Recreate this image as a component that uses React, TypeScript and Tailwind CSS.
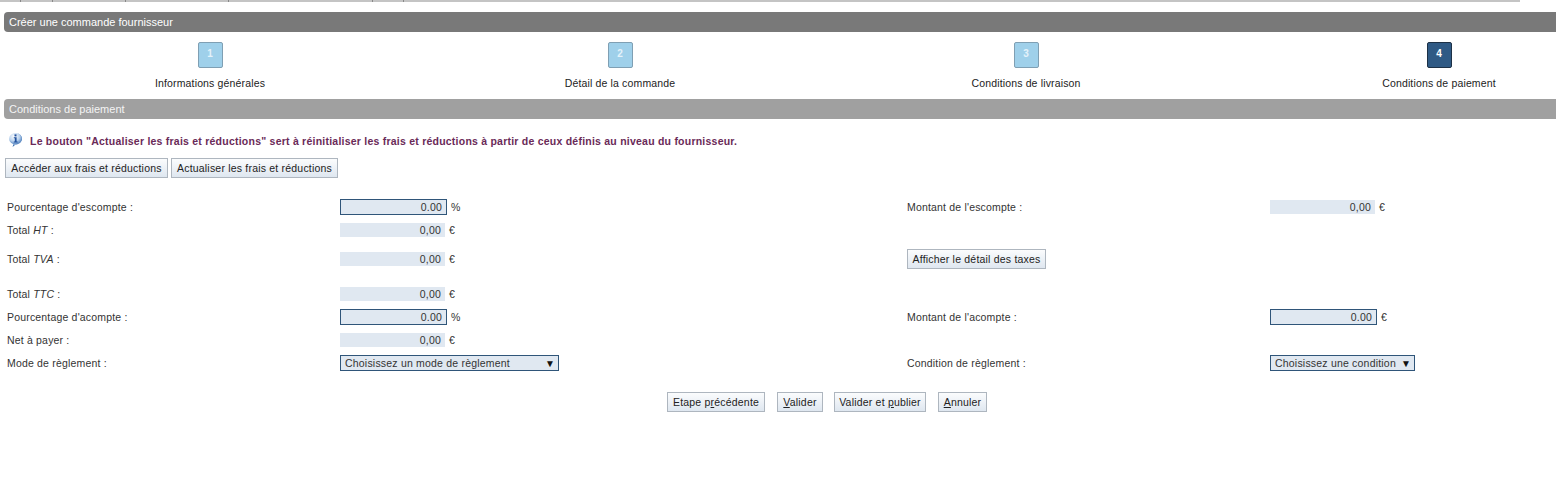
const F = "font-['Liberation_Sans',Arial,sans-serif]";

function Step({ n, label, active, ml }: { n: number; label: string; active?: boolean; ml: string }) {
  return (
    <div className={`${ml} w-[130px] shrink-0 flex flex-col items-center`}>
      <div
        className={
          active
            ? "w-[25px] h-[26px] rounded-[2px] border border-[#1d3146] bg-[#2f5a85] text-white font-bold text-[10px] flex items-center justify-center pb-[3px]"
            : "w-[25px] h-[26px] rounded-[2px] border border-[#7f9fb3] bg-[#9fd0ea] text-[#e4f2fa] font-bold text-[10px] flex items-center justify-center pb-[3px]"
        }
      >
        {n}
      </div>
      <div className="mt-[8px] text-[10.5px] leading-[14px] tracking-[0.15px] text-[#222] whitespace-nowrap">{label}</div>
    </div>
  );
}

function Btn({ children, w }: { children: React.ReactNode; w: string }) {
  return (
    <button className={`${w} h-[20px] shrink-0 flex items-center justify-center pt-px border border-[#aeb6bf] bg-gradient-to-b from-[#fbfcfd] to-[#dfe7f0] text-[10.5px] tracking-[0.2px] text-[#222] whitespace-nowrap`}>
      {children}
    </button>
  );
}

function Ro({ unit, w = "w-[105px]" }: { unit: string; w?: string }) {
  return (
    <div className="flex items-center mb-px">
      <div className={`${w} h-[14px] bg-[#e0e8f1] flex items-center justify-end pr-[4px] pt-px text-[10.5px] text-[#333]`}>0,00</div>
      <span className="ml-[4px] pt-px text-[10.5px] text-[#333]">{unit}</span>
    </div>
  );
}

function Inp({ unit }: { unit: string }) {
  return (
    <div className="flex items-center mb-px">
      <div className="w-[107px] h-[16px] bg-[#e0e8f1] border border-[#2f5579] flex items-center justify-end pr-[4px] pt-px text-[10.5px] text-[#333]">0.00</div>
      <span className="ml-[4px] pt-px text-[10.5px] text-[#333]">{unit}</span>
    </div>
  );
}

function Sel({ label, w }: { label: string; w: string }) {
  return (
    <div className={`${w} h-[16px] mb-px bg-[#e0e8f1] border border-[#2f5579] flex items-center justify-between pl-[4px] pr-[3px] pt-px text-[10.5px] tracking-[0.2px] text-[#333] whitespace-nowrap`}>
      <span>{label}</span>
      <span className="text-[10px] leading-none text-[#111]">▼</span>
    </div>
  );
}

function Row({ h, a, b, c, d }: { h: string; a?: React.ReactNode; b?: React.ReactNode; c?: React.ReactNode; d?: React.ReactNode }) {
  return (
    <div className={`${h} grid grid-cols-[333px_567px_363px_1fr] items-center pl-[7px] text-[10.5px] tracking-[0.18px] text-[#333]`}>
      <div>{a}</div>
      <div>{b}</div>
      <div>{c}</div>
      <div>{d}</div>
    </div>
  );
}

export default function App() {
  return (
    <div className={`${F} w-[1556px] h-[492px] bg-white overflow-hidden`}>
      <div className="w-[1520px] h-[2px] bg-[#c4c4c4] flex">
        <div className="ml-[20px] w-px h-[2px] bg-[#888]" />
        <div className="ml-[31px] w-px h-[2px] bg-[#888]" />
        <div className="ml-[72px] w-px h-[2px] bg-[#888]" />
        <div className="ml-[102px] w-px h-[2px] bg-[#888]" />
        <div className="ml-[143px] w-px h-[2px] bg-[#888]" />
        <div className="ml-[30px] w-px h-[2px] bg-[#888]" />
      </div>

      <div className="mt-[10px] ml-[4px] h-[20px] bg-[#797979] rounded-l-[4px] flex items-center pl-[5px] pt-px text-[11px] text-white">
        Créer une commande fournisseur
      </div>

      <div className="mt-[10px] flex h-[57px]">
        <Step n={1} label="Informations générales" ml="ml-[145px]" />
        <Step n={2} label="Détail de la commande" ml="ml-[280px]" />
        <Step n={3} label="Conditions de livraison" ml="ml-[276px]" />
        <Step n={4} label="Conditions de paiement" ml="ml-[283px]" active />
      </div>

      <div className="ml-[4px] h-[20px] bg-[#a0a0a0] rounded-l-[4px] flex items-center pl-[5px] pt-px text-[11px] text-[#f4f4f4]">
        Conditions de paiement
      </div>

      <div className="mt-[14px] h-[18px] flex items-center pl-[8px]">
        <svg width="15" height="16" viewBox="0 0 15 16" className="shrink-0 -mt-[4px]">
          <defs>
            <radialGradient id="b" cx="40%" cy="30%" r="75%">
              <stop offset="0%" stopColor="#ffffff" />
              <stop offset="55%" stopColor="#b9d2ee" />
              <stop offset="100%" stopColor="#3f73b5" />
            </radialGradient>
          </defs>
          <path d="M7.5 1a6.3 5.8 0 1 1-2.2 11.2L4.6 15l3-2.5A6.3 5.8 0 0 0 7.5 1z" fill="#3f73b5" />
          <ellipse cx="7.5" cy="6.8" rx="6.4" ry="5.7" fill="url(#b)" />
          <rect x="6.5" y="2.4" width="2" height="2" fill="#1f4f9c" />
          <path d="M5.8 5.2h2.8v4.4h1v1H5.8v-1h1V6.2h-1z" fill="#1f4f9c" />
        </svg>
        <span className="ml-[7px] text-[10.5px] font-bold tracking-[0.23px] text-[#6a2a58] whitespace-nowrap">
          Le bouton "Actualiser les frais et réductions" sert à réinitialiser les frais et réductions à partir de ceux définis au niveau du fournisseur.
        </span>
      </div>

      <div className="mt-[7px] ml-[5px] flex gap-[3px]">
        <Btn w="w-[163px]">Accéder aux frais et réductions</Btn>
        <Btn w="w-[167px]">Actualiser les frais et réductions</Btn>
      </div>

      <div className="mt-[18px]">
        <Row h="h-[23px]" a="Pourcentage d'escompte :" b={<Inp unit="%" />} c="Montant de l'escompte :" d={<Ro unit="€" />} />
        <Row h="h-[23px]" a={<>Total <i>HT</i> :</>} b={<Ro unit="€" />} />
        <Row h="h-[35px]" a={<>Total <i>TVA</i> :</>} b={<Ro unit="€" />} c={<div className="mb-px"><Btn w="w-[139px]">Afficher le détail des taxes</Btn></div>} />
        <div className="h-[6px]" />
        <Row h="h-[23px]" a={<>Total <i>TTC</i> :</>} b={<Ro unit="€" />} />
        <Row h="h-[23px]" a="Pourcentage d'acompte :" b={<Inp unit="%" />} c="Montant de l'acompte :" d={<Inp unit="€" />} />
        <Row h="h-[23px]" a="Net à payer :" b={<Ro unit="€" />} />
        <Row h="h-[23px]" a="Mode de règlement :" b={<Sel label="Choisissez un mode de règlement" w="w-[219px]" />} c="Condition de règlement :" d={<Sel label="Choisissez une condition" w="w-[145px]" />} />
      </div>

      <div className="mt-[17px] flex pl-[667px]">
        <Btn w="w-[98px]"><span>Etape p<u>r</u>écédente</span></Btn>
        <div className="ml-[12px]"><Btn w="w-[46px]"><span><u>V</u>alider</span></Btn></div>
        <div className="ml-[11px]"><Btn w="w-[92px]"><span>Valider et <u>p</u>ublier</span></Btn></div>
        <div className="ml-[12px]"><Btn w="w-[49px]"><span><u>A</u>nnuler</span></Btn></div>
      </div>
    </div>
  );
}
